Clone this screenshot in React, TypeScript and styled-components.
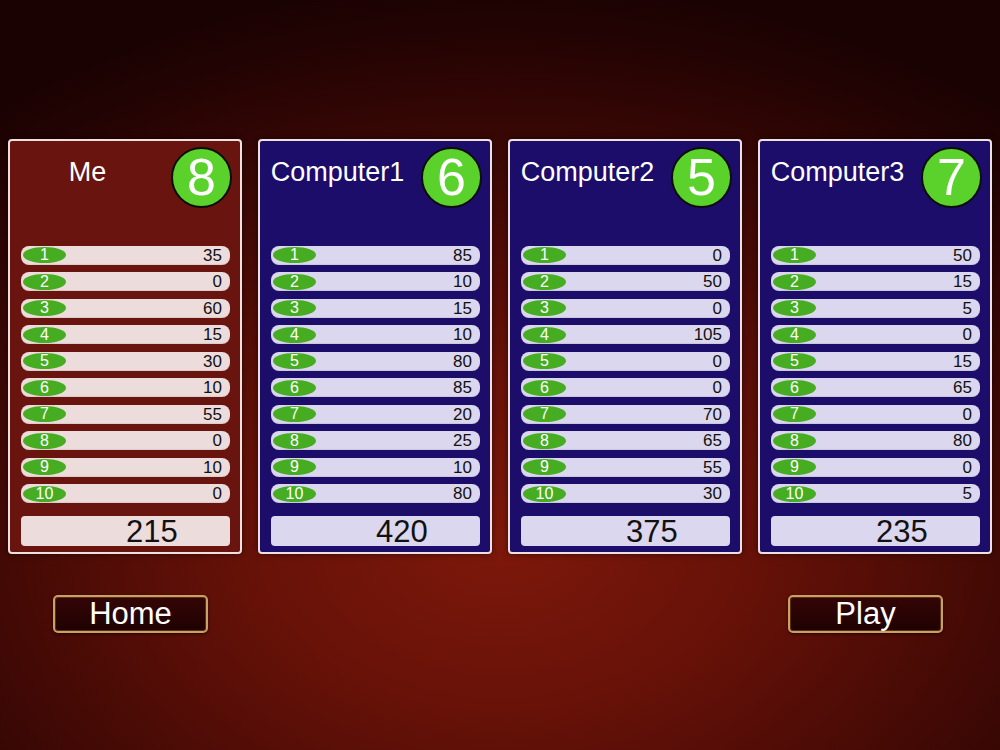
import React from 'react';
import styled, { createGlobalStyle, css } from 'styled-components';

const GlobalStyle = createGlobalStyle`
  html, body {
    margin: 0;
    padding: 0;
    width: 1000px;
    height: 750px;
    overflow: hidden;
  }
  body {
    font-family: "Liberation Sans", Arial, sans-serif;
  }
`;

type Tone = 'red' | 'blue';

interface Player {
  name: string;
  rank: number;
  tone: Tone;
  scores: number[];
}

const players: Player[] = [
  { name: 'Me', rank: 8, tone: 'red', scores: [35, 0, 60, 15, 30, 10, 55, 0, 10, 0] },
  { name: 'Computer1', rank: 6, tone: 'blue', scores: [85, 10, 15, 10, 80, 85, 20, 25, 10, 80] },
  { name: 'Computer2', rank: 5, tone: 'blue', scores: [0, 50, 0, 105, 0, 0, 70, 65, 55, 30] },
  { name: 'Computer3', rank: 7, tone: 'blue', scores: [50, 15, 5, 0, 15, 65, 0, 80, 0, 5] },
];

const Screen = styled.div`
  width: 1000px;
  height: 750px;
  box-sizing: border-box;
  padding: 139px 8px 0 8px;
  display: flex;
  flex-direction: column;
  background: radial-gradient(
    ellipse 80% 75% at 50% 72%,
    #7e180b 0%,
    #681208 30%,
    #460a05 60%,
    #230303 90%,
    #1a0202 100%
  );
`;

const Board = styled.div`
  display: grid;
  grid-template-columns: repeat(4, 234px);
  gap: 16px;
`;

const Panel = styled.div<{ $tone: Tone }>`
  height: 415px;
  box-sizing: border-box;
  border: 2px solid #eee0de;
  border-radius: 4px;
  padding: 5px 10px 6px 11px;
  display: flex;
  flex-direction: column;
  box-shadow: 0 0 6px rgba(0, 0, 0, 0.5);
  background: ${(p) => (p.$tone === 'red' ? '#6a140f' : '#1c0d6b')};
`;

const Header = styled.div`
  height: 100px;
  display: flex;
  align-items: flex-start;
`;

const Name = styled.div`
  flex: 1;
  text-align: center;
  color: #ffffff;
  font-size: 27px;
  line-height: 27px;
  padding-top: 13px;
  padding-right: 6px;
  margin-left: -11px;
  white-space: nowrap;
`;

const Rank = styled.div`
  width: 61px;
  height: 61px;
  box-sizing: border-box;
  border-radius: 50%;
  border: 2px solid #0c0c0c;
  background: #5bd22c;
  color: #ffffff;
  font-size: 52px;
  line-height: 57px;
  text-align: center;
  margin-top: 1px;
  margin-right: -2px;
`;

const Rows = styled.div`
  display: flex;
  flex-direction: column;
  gap: 7.5px;
`;

const lightFill = css<{ $tone: Tone }>`
  background: ${(p) => (p.$tone === 'red' ? '#eddcdc' : '#dbd7ee')};
`;

const Row = styled.div<{ $tone: Tone }>`
  ${lightFill};
  height: 19px;
  border-radius: 8px;
  display: flex;
  align-items: center;
  padding: 0 8px 0 2px;
  box-shadow: inset 0 -1px 1px rgba(0, 0, 0, 0.08);
`;

const Pill = styled.div`
  width: 43px;
  height: 16px;
  border-radius: 50%;
  background: #46ad22;
  color: #ffffff;
  font-size: 16px;
  line-height: 16px;
  text-align: center;
  margin-right: -4px;
`;

const Value = styled.div`
  flex: 1;
  text-align: right;
  color: #111;
  font-size: 17px;
  line-height: 19px;
`;

const Total = styled.div<{ $tone: Tone }>`
  ${lightFill};
  margin-top: 13px;
  height: 30px;
  border-radius: 4px;
  color: #111;
  font-size: 31px;
  line-height: 31px;
  padding-left: 105px;
`;

const Footer = styled.div`
  margin-top: 41px;
  display: flex;
  justify-content: space-between;
  padding: 0 49px 0 45px;
`;

const NavButton = styled.button`
  width: 155px;
  height: 38px;
  box-sizing: border-box;
  border: 2px solid #c9a066;
  border-radius: 5px;
  background: linear-gradient(#340505, #1f0202);
  box-shadow: inset 0 0 0 1px #5a3010, 0 1px 3px rgba(0, 0, 0, 0.6);
  color: #ffffff;
  font-family: "Liberation Sans", Arial, sans-serif;
  font-size: 31px;
  line-height: 32px;
  padding: 0;
  cursor: pointer;
`;

const PlayerPanel: React.FC<{ player: Player }> = ({ player }) => {
  const total = player.scores.reduce((a, b) => a + b, 0);
  return (
    <Panel $tone={player.tone}>
      <Header>
        <Name>{player.name}</Name>
        <Rank>{player.rank}</Rank>
      </Header>
      <Rows>
        {player.scores.map((s, i) => (
          <Row key={i} $tone={player.tone}>
            <Pill>{i + 1}</Pill>
            <Value>{s}</Value>
          </Row>
        ))}
      </Rows>
      <Total $tone={player.tone}>{total}</Total>
    </Panel>
  );
};

const App: React.FC = () => (
  <>
    <GlobalStyle />
    <Screen>
      <Board>
        {players.map((p) => (
          <PlayerPanel key={p.name} player={p} />
        ))}
      </Board>
      <Footer>
        <NavButton>Home</NavButton>
        <NavButton>Play</NavButton>
      </Footer>
    </Screen>
  </>
);

export default App;
